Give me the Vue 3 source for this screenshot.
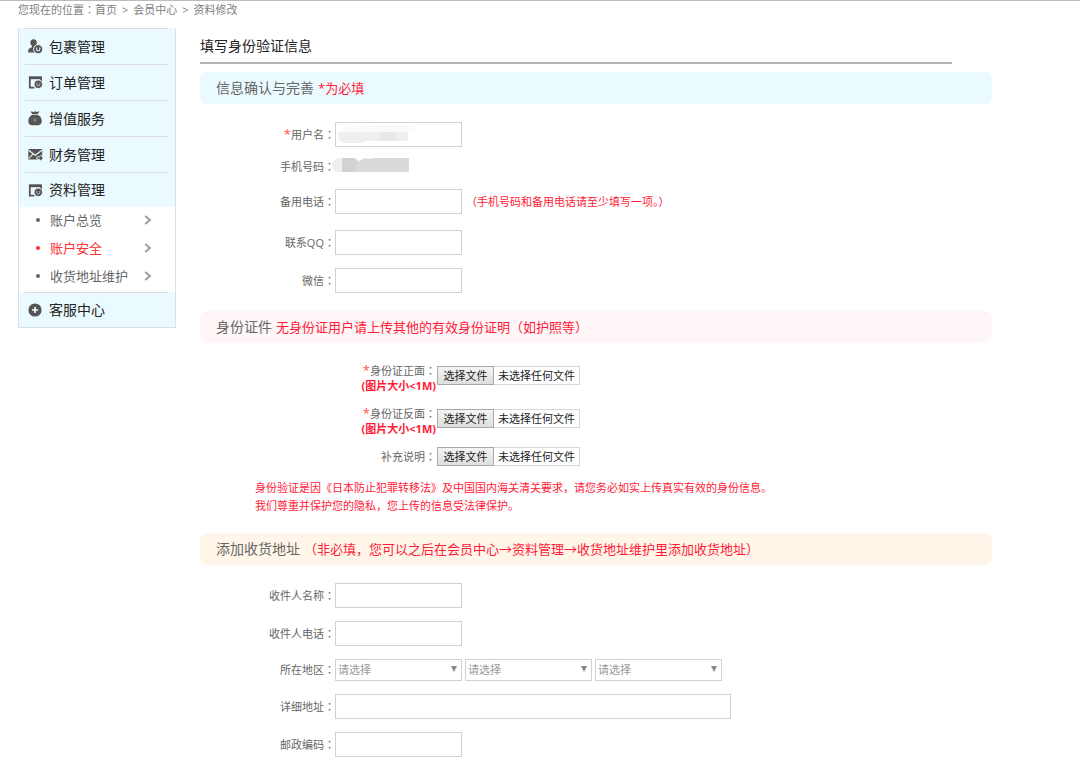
<script setup>
import { ref } from 'vue'

const menu = [
  { icon: 'user', text: '包裹管理' },
  { icon: 'window', text: '订单管理' },
  { icon: 'bag', text: '增值服务' },
  { icon: 'mail', text: '财务管理' },
  {
    icon: 'window',
    text: '资料管理',
    children: [
      { text: '账户总览' },
      { text: '账户安全', active: true },
      { text: '收货地址维护' }
    ]
  },
  { icon: 'plus', text: '客服中心' }
]

const files = [
  { id: 'front', label: '身份证正面', required: true },
  { id: 'back', label: '身份证反面', required: true },
  { id: 'extra', label: '补充说明', required: false }
]

const regions = ['省份', '城市', '区县']
const fileNames = ref({})
const pickers = {}

function pick(id) {
  pickers[id].click()
}

function onPicked(id, event) {
  const file = event.target.files[0]
  fileNames.value[id] = file ? file.name : ''
}
</script>

<template>
  <div class="page">
    <nav class="crumbs" aria-label="当前位置">
      <span>您现在的位置<span class="colon">：</span></span><a href="#">首页</a>
      <span class="sep">&gt;</span><a href="#">会员中心</a>
      <span class="sep">&gt;</span><a href="#">资料修改</a>
    </nav>

    <div class="columns">
      <aside class="sidebar">
        <div v-for="item in menu" :key="item.text" class="group">
          <a href="#" class="item" :class="{ open: item.children }">
            <svg class="icon" viewBox="0 0 15 15" aria-hidden="true">
              <g v-if="item.icon === 'user'">
                <path d="M5.5 0.2C7.7 0.2 9 1.7 8.8 3.8C8.7 5.2 8 6.3 7.4 7C7.3 8 7.6 8.4 8.6 8.8L7 13.4H0.2C0 10.8 0.6 9.6 2.1 9C3.8 8.5 4.2 8 4 7C3 6 2.3 5 2.3 3.6C2.3 1.6 3.6 0.2 5.5 0.2Z" fill="#555" />
                <circle cx="10.2" cy="10.2" r="4.6" fill="#555" stroke="#ebfaff" />
                <path d="M8.6 8.4V10.2A1.6 1.6 0 0 0 11.8 10.2V8.4" fill="none" stroke="#d5e1e5" stroke-width="1.2" />
              </g>
              <g v-else-if="item.icon === 'window'">
                <path d="M1 1.6H13.8V4.2H1Z" fill="#555" />
                <path d="M6.4 12.6H1.8V2.4H13V6" fill="none" stroke="#555" stroke-width="1.8" />
                <circle cx="10.3" cy="9.3" r="4.3" fill="#555" stroke="#ebfaff" />
                <path d="M8.8 8V9.5A1.5 1.5 0 0 0 11.8 9.5V8" fill="none" stroke="#b9c5c9" stroke-width="1" />
              </g>
              <g v-else-if="item.icon === 'bag'">
                <path d="M2.6 0.3L5.4 1L7 0.2L8.6 1L11.4 0.3L9.8 3.2H4.2Z" fill="#555" />
                <path d="M4 4H10C12.8 5.6 14 8 13.7 10.8C13.4 13 12.2 14.2 10 14.2H4C1.8 14.2 .6 13 .3 10.8C0 8 1.2 5.6 4 4Z" fill="#555" />
                <path d="M5.2 7L7 9L8.8 7M7 9V11.6M5.4 9.6H8.6" fill="none" stroke="#8b9396" stroke-width=".8" />
              </g>
              <g v-else-if="item.icon === 'mail'">
                <path d="M0.3 2H14.2V9H11V12.5H0.3Z" fill="#555" />
                <path d="M0.3 3L7.2 8.2L14.2 3M0.8 11.5L4.8 7.2" fill="none" stroke="#ebfaff" stroke-width="1.1" />
                <path d="M8.6 11H13.6M12 8.8L14.2 11L12 13.2" fill="none" stroke="#ebfaff" stroke-width="2.8" />
                <path d="M9.4 11H13.6M12 9L14 11L12 13" fill="none" stroke="#555" stroke-width="1.5" />
              </g>
              <g v-else>
                <circle cx="7" cy="7" r="6.6" fill="#555" />
                <path d="M7 4V10M4 7H10" stroke="#ebfaff" stroke-width="1.7" />
              </g>
            </svg>
            <span>{{ item.text }}</span>
          </a>
          <ul v-if="item.children" class="sub">
            <li v-for="child in item.children" :key="child.text">
              <a href="#" class="sub-link" :class="{ active: child.active }">
                <span class="dot"></span>
                <span>{{ child.text }}</span>
                <svg class="chevron" viewBox="0 0 8 10" aria-hidden="true">
                  <path d="M1.2 1L6 5L1.2 9" fill="none" stroke="#999" stroke-width="1.8" />
                </svg>
              </a>
            </li>
          </ul>
        </div>
      </aside>

      <main class="content">
        <h1 class="title">填写身份验证信息</h1>
        <form @submit.prevent>
          <h2 class="band blue">信息确认与完善<span class="hint">*为必填</span></h2>
          <div class="fields">
            <div class="row">
              <label for="user"><span class="star">*</span>用户名<span class="colon">：</span></label>
              <div class="masked">
                <input id="user" type="text" class="text" />
                <svg class="mask" viewBox="0 0 80 20" aria-hidden="true">
                  <path d="M2 10Q6 2 18 2L50 1H70Q78 1 79 7H72V16H30L26 18H8Q1 15 2 10Z" fill="#fafafa" />
                  <path d="M2 8H72V17H30L24 19H8Q1 16 2 8Z" fill="#efefef" />
                  <path d="M44 8H60V17H44Z" fill="#e9e9e9" />
                </svg>
              </div>
            </div>
            <div class="row phone">
              <span class="label">手机号码<span class="colon">：</span></span>
              <svg class="phone-mask" viewBox="0 0 77 14" role="img" aria-label="手机号码已隐藏">
                <path d="M12 0H6Q0 2 0 7Q0 13 6 14H12Z" fill="#f0efed" />
                <path d="M10 0H22L27 3L33 0L36 1L43 0H77V14H10Z" fill="#d9dadb" />
                <path d="M10 0H22L24 2V14H10Z" fill="#d1d2d3" />
              </svg>
            </div>
            <div class="row spaced">
              <label for="tel2">备用电话<span class="colon">：</span></label>
              <input id="tel2" type="tel" class="text" />
              <span class="note">（手机号码和备用电话请至少填写一项。）</span>
            </div>
            <div class="row">
              <label for="qq">联系QQ<span class="colon">：</span></label>
              <input id="qq" type="text" class="text" />
            </div>
            <div class="row">
              <label for="wechat">微信<span class="colon">：</span></label>
              <input id="wechat" type="text" class="text" />
            </div>
          </div>

          <h2 class="band pink">身份证件<span class="hint">无身份证用户请上传其他的有效身份证明（如护照等）</span></h2>
          <div class="files">
            <div v-for="file in files" :key="file.id" class="file-row" :class="{ tall: file.required }">
              <label :for="file.id">
                <span v-if="file.required" class="star">*</span>{{ file.label }}<span class="colon">：</span>
                <strong v-if="file.required" class="limit">(图片大小&lt;1M)</strong>
              </label>
              <div class="file-box">
                <input
                  :id="file.id"
                  :ref="(el) => (pickers[file.id] = el)"
                  type="file"
                  hidden
                  @change="onPicked(file.id, $event)"
                />
                <button type="button" class="file-button" @click="pick(file.id)">选择文件</button>
                <span class="file-name">{{ fileNames[file.id] || '未选择任何文件' }}</span>
              </div>
            </div>
            <p class="notice">
              身份验证是因《日本防止犯罪转移法》及中国国内海关清关要求，请您务必如实上传真实有效的身份信息。<br />
              我们尊重并保护您的隐私，您上传的信息受法律保护。
            </p>
          </div>

          <h2 class="band cream">添加收货地址<span class="hint">（非必填，您可以之后在会员中心→资料管理→收货地址维护里添加收货地址）</span></h2>
          <div class="fields">
            <div class="row">
              <label for="name">收件人名称<span class="colon">：</span></label>
              <input id="name" type="text" class="text" />
            </div>
            <div class="row">
              <label for="tel">收件人电话<span class="colon">：</span></label>
              <input id="tel" type="tel" class="text" />
            </div>
            <div class="row">
              <span class="label">所在地区<span class="colon">：</span></span>
              <div class="selects">
                <div v-for="region in regions" :key="region" class="select">
                  <select :aria-label="region">
                    <option>请选择</option>
                  </select>
                  <svg class="arrow" viewBox="0 0 6 6" aria-hidden="true"><path d="M0 0H6L3 6Z" fill="#888" /></svg>
                </div>
              </div>
            </div>
            <div class="row">
              <label for="address">详细地址<span class="colon">：</span></label>
              <input id="address" type="text" class="text wide" />
            </div>
            <div class="row">
              <label for="zip">邮政编码<span class="colon">：</span></label>
              <input id="zip" type="text" class="text" />
            </div>
          </div>
        </form>
      </main>
    </div>
  </div>
</template>

<style>
body {
  background: #fff;
}
</style>

<style scoped>
* {
  box-sizing: border-box;
}
.page {
  border-top: 1px solid #bbb;
  padding: 0 88px 16px 18px;
  font-family: "Open Sans", "Noto Sans CJK SC", sans-serif;
  font-size: 11px;
  line-height: 16px;
  color: #666;
}
a {
  color: inherit;
  text-decoration: none;
}
.colon {
  font-family: "Noto Sans CJK TC", sans-serif;
  line-height: 1;
}
.crumbs {
  display: flex;
  align-items: baseline;
  height: 27px;
  line-height: 18px;
  color: #808080;
}
.sep {
  margin: 0 5px;
}
.columns {
  display: flex;
  align-items: flex-start;
  gap: 24px;
}
.sidebar {
  flex: 0 0 158px;
  border: 1px solid #dcdfe0;
  border-top: 0;
  background: #ebfaff;
}
.item {
  display: flex;
  align-items: center;
  gap: 6px;
  height: 36px;
  margin: 0 7px 0 6px;
  padding-left: 3px;
  border-top: 1px solid #dcdcdc;
  font-size: 14px;
  color: #222;
}
.item.open,
.group:last-child .item {
  height: 35px;
}
.icon {
  width: 15px;
  height: 15px;
}
.sub {
  margin: 0;
  padding: 0 0 1px;
  list-style: none;
  background: #fff;
}
.sub-link {
  display: flex;
  align-items: center;
  height: 28px;
  padding: 0 23px 2px 17px;
  font-size: 13px;
}
.dot {
  width: 4px;
  height: 4px;
  margin-right: 10px;
  border-radius: 50%;
  background: currentColor;
}
.active {
  color: #fb3030;
}
.chevron {
  width: 8px;
  height: 10px;
  margin-left: auto;
}
.content {
  flex: 1;
  min-width: 0;
}
.title {
  height: 36px;
  margin: 0 40px 8px 0;
  border-bottom: 2px solid #b4b4b4;
  font-size: 14px;
  font-weight: 400;
  line-height: 36px;
  color: #222;
}
.band {
  margin: 0;
  padding: 0 16px;
  border-radius: 8px;
  font-size: 14px;
  font-weight: 400;
  line-height: 32px;
}
.blue {
  background: #ebfaff;
}
.pink {
  background: #fff6f8;
}
.cream {
  background: #fff6e9;
}
.hint {
  margin-left: 4px;
  font-size: 13px;
  color: #ff1a38;
}
.fields {
  display: flex;
  flex-direction: column;
  gap: 13px;
  padding: 18px 0;
}
.row {
  display: grid;
  grid-template-columns: 135px auto 1fr;
  align-items: center;
  justify-items: start;
}
.row > label,
.row > .label {
  justify-self: end;
}
.phone {
  height: 16px;
  margin: -2px 0 2px;
}
.spaced {
  margin-bottom: 3px;
}
.star {
  font-size: 13px;
  line-height: 1;
  color: #ff5050;
}
.text {
  display: block;
  width: 127px;
  height: 25px;
  padding: 0 4px;
  border: 1px solid #d2d2d2;
  background: #fff;
  font: inherit;
}
.wide {
  width: 396px;
  max-width: 100%;
}
.masked {
  position: relative;
}
.mask {
  position: absolute;
  left: 1px;
  top: 2px;
  width: 80px;
  height: 20px;
  pointer-events: none;
}
.phone-mask {
  width: 77px;
  height: 14px;
  margin: 0 0 4px -3px;
}
.note {
  margin-left: 4px;
  color: #ff1a38;
}
.selects {
  display: flex;
  gap: 3px;
}
.select {
  position: relative;
}
select {
  display: block;
  width: 127px;
  height: 22px;
  padding: 0 16px 0 2px;
  border: 1px solid #d2d2d2;
  border-radius: 0;
  appearance: none;
  background: #fff;
  font: inherit;
  color: #999;
}
.arrow {
  position: absolute;
  right: 5px;
  top: 7px;
  width: 6px;
  height: 6px;
  pointer-events: none;
}
.files {
  padding: 20px 0 18px;
}
.file-row {
  display: grid;
  grid-template-columns: 237px auto;
  justify-content: start;
  align-items: start;
  line-height: 15px;
  text-align: right;
}
.file-row label {
  padding: 2px 1px 0 0;
}
.tall {
  height: 41px;
}
.tall + .tall {
  margin-top: 2px;
}
.tall label {
  padding-top: 0;
}
.tall .file-box {
  margin-top: 3px;
}
.limit {
  display: block;
  color: #ff1a38;
}
.file-box {
  display: flex;
  align-items: center;
  height: 19px;
  border: 1px solid #d8d8d8;
  border-left: 0;
  color: #222;
}
.file-button {
  width: 57px;
  height: 19px;
  padding: 0;
  border: 1px solid #a8a8a8;
  background: linear-gradient(#f4f4f4, #dedede);
  font: inherit;
  color: inherit;
}
.file-name {
  padding: 0 4px;
}
.notice {
  margin: 13px 0 0 55px;
  line-height: 18px;
  color: #ff1a38;
}
</style>
